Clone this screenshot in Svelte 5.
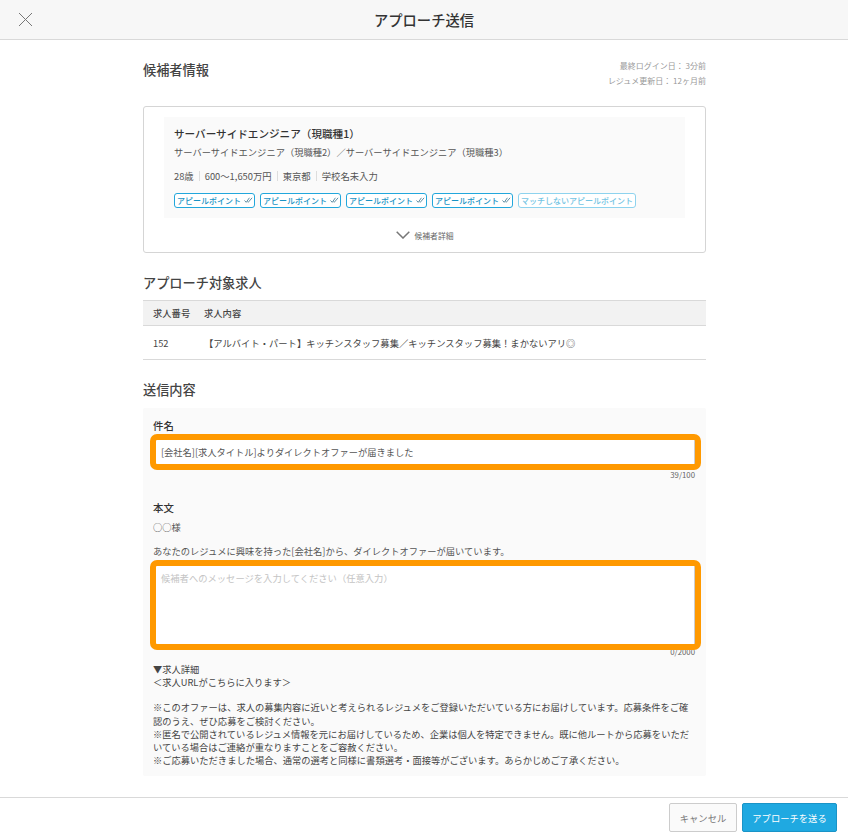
<script>
  const badges = ['アピールポイント', 'アピールポイント', 'アピールポイント', 'アピールポイント'];
</script>

<div class="page">
  <header class="top">
    <button class="close" aria-label="閉じる">
      <svg width="15" height="15" viewBox="0 0 15 15"><path d="M1 1l13 13M14 1L1 14" stroke="#777" stroke-width="1" fill="none"/></svg>
    </button>
    <h1>アプローチ送信</h1>
  </header>

  <main class="main">
    <section class="head-row">
      <h2>候補者情報</h2>
      <div class="dates">
        <p>最終ログイン日： 3分前</p>
        <p>レジュメ更新日： 12ヶ月前</p>
      </div>
    </section>

    <section class="card">
      <div class="inner">
        <h3>サーバーサイドエンジニア（現職種1）</h3>
        <p class="sub">サーバーサイドエンジニア（現職種2）／サーバーサイドエンジニア（現職種3）</p>
        <ul class="meta">
          <li>28歳</li><li>600〜1,650万円</li><li>東京都</li><li>学校名未入力</li>
        </ul>
        <div class="badges">
          {#each badges as b}
            <span class="badge">{b}
              <svg width="9" height="7" viewBox="0 0 10 7"><path d="M0.5 3.5l2 2 3.5-5M3.8 4.6l0.9 0.9 4.3-5" stroke="#5f8ea3" stroke-width="1.1" fill="none"/></svg>
            </span>
          {/each}
          <span class="badge off">マッチしないアピールポイント</span>
        </div>
      </div>
      <div class="detail">
        <svg width="14" height="8" viewBox="0 0 14 8"><path d="M0.7 0.7L7 7l6.3-6.3" stroke="#777" stroke-width="1.5" fill="none"/></svg>
        <span>候補者詳細</span>
      </div>
    </section>

    <h2 class="job-title">アプローチ対象求人</h2>
    <table class="jobs">
      <thead><tr><th class="c1">求人番号</th><th>求人内容</th></tr></thead>
      <tbody><tr><td class="c1">152</td><td>【アルバイト・パート】キッチンスタッフ募集／キッチンスタッフ募集！まかないアリ◎</td></tr></tbody>
    </table>

    <h2 class="send-title">送信内容</h2>
    <section class="form">
      <div class="label">件名</div>
      <div class="input">[会社名][求人タイトル]よりダイレクトオファーが届きました</div>
      <div class="count">39/100</div>
      <div class="label body-label">本文</div>
      <p class="line">○○様</p>
      <p class="line intro">あなたのレジュメに興味を持った[会社名]から、ダイレクトオファーが届いています。</p>
      <div class="textarea">候補者へのメッセージを入力してください（任意入力）</div>
      <div class="count c2">0/2000</div>
      <p class="para">▼求人詳細<br/>＜求人URLがこちらに入ります＞</p>
      <p class="para notes">※このオファーは、求人の募集内容に近いと考えられるレジュメをご登録いただいている方にお届けしています。応募条件をご確認のうえ、ぜひ応募をご検討ください。<br/>※匿名で公開されているレジュメ情報を元にお届けしているため、企業は個人を特定できません。既に他ルートから応募をいただいている場合はご連絡が重なりますことをご容赦ください。<br/>※ご応募いただきました場合、通常の選考と同様に書類選考・面接等がございます。あらかじめご了承ください。</p>
    </section>
  </main>

  <footer class="foot">
    <button class="btn cancel">キャンセル</button>
    <button class="btn send">アプローチを送る</button>
  </footer>
</div>

<style>
  :global(body) { margin: 0; background: #fff; }
  * { box-sizing: border-box; }
  .page {
    width: 848px; height: 836px; display: flex; flex-direction: column; overflow: hidden;
    font-family: "Noto Sans CJK JP", "Noto Sans", sans-serif; color: #444; background: #fff;
  }
  h1, h2, h3, p, ul { margin: 0; padding: 0; }
  .top {
    height: 40px; flex: none; background: #f7f7f7; border-bottom: 1px solid #d9d9d9;
    display: flex; align-items: center; justify-content: center; position: relative;
  }
  .close { position: absolute; left: 18px; top: 12px; padding: 0; border: 0; background: none; display: flex; }
  h1 { font-size: 14.3px; font-weight: 500; color: #333; line-height: 40px; }
  .main { width: 563px; margin-left: 143px; flex: 1; min-height: 0; padding-top: 20px; }
  .head-row { display: flex; justify-content: space-between; align-items: flex-start; height: 46px; }
  h2 { font-size: 13.2px; font-weight: 500; color: #444; line-height: 20px; }
  .dates { font-size: 8px; color: #999; text-align: right; line-height: 14.6px; margin-top: -1px; }
  .card { height: 147px; border: 1px solid #d5d5d5; border-radius: 3px; padding: 10px 20px 0; }
  .inner { height: 101px; background: #fafafa; padding: 9px 10px 0; }
  h3 { font-size: 10.6px; font-weight: 500; color: #333; line-height: 15px; }
  .sub { font-size: 9.27px; line-height: 14px; color: #555; margin-top: 4px; }
  .meta { list-style: none; display: flex; font-size: 9.35px; color: #555; margin-top: 10px; }
  .meta li + li { margin-left: 5px; padding-left: 5px; border-left: 1px solid #ddd; }
  .meta li { height: 10px; line-height: 10px; margin-top: 2px; }
  .badges { display: flex; gap: 5px; margin-top: 12px; }
  .badge {
    height: 15px; border: 1px solid #22a7dc; border-radius: 3px; background: #fff; color: #1a93c4;
    font-size: 8px; font-weight: 500; line-height: 13px; padding: 0 1px 0 2px; display: inline-flex; align-items: center; gap: 3px; white-space: nowrap;
  }
  .badge.off { border-color: #8ed3ee; color: #74c4e3; padding: 0 2px; }
  .detail { display: flex; justify-content: center; align-items: center; gap: 5px; height: 34px; font-size: 7.8px; color: #666; }
  .job-title { margin-top: 20px; }
  .jobs { width: 100%; border-collapse: collapse; margin-top: 7px; font-size: 9.3px; }
  .jobs th { height: 25px; background: #f2f2f2; border-top: 1px solid #d9d9d9; border-bottom: 1px solid #d9d9d9; text-align: left; font-weight: 500; color: #444; padding: 0; }
  .jobs td { height: 34px; border-bottom: 1px solid #d9d9d9; padding: 0; color: #444; }
  .c1 { width: 61px; padding-left: 10px !important; }
  .send-title { margin-top: 20px; }
  .form { margin-top: 8px; height: 368px; background: #fafafa; padding: 10px 11px 0 10px; border-radius: 2px; }
  .label { font-size: 10.4px; font-weight: 500; color: #333; line-height: 15px; }
  .input {
    margin: 7px 0 0 3px; width: 539px; height: 24px; background: #fff; outline: 6px solid #ff9900; border-radius: 1px;
    border-right: 1px solid #ccc;
    font-size: 9.24px; line-height: 24px; padding-left: 5px; color: #555; white-space: nowrap;
  }
  .count { font-size: 7.8px; color: #666; text-align: right; line-height: 12px; margin-top: 5px; }
  .body-label { margin-top: 19px; }
  .line { font-size: 9.28px; line-height: 14px; color: #555; margin-top: 5px; }
  .intro { margin-top: 10px; }
  .textarea {
    margin: 8px 0 0 3px; width: 539px; height: 78px; background: #fff; outline: 6px solid #ff9900; border-radius: 1px;
    border-right: 1px solid #ccc;
    font-size: 9.3px; line-height: 14px; padding: 5px 5px; color: #c4c4c4;
  }
  .c2 { margin-top: 3px; line-height: 10px; }
  .para { font-size: 9.28px; line-height: 13.2px; color: #444; margin-top: 6px; }
  .notes { margin-top: 12px; }
  .foot {
    height: 39px; flex: none; border-top: 1px solid #d9d9d9; display: flex; justify-content: flex-end; gap: 5px;
    padding: 5px 11px 0 0; background: #fff;
  }
  .btn { height: 29px; border-radius: 2px; font-family: inherit; font-size: 9.3px; padding: 0; }
  .cancel { width: 68px; background: #fafafa; border: 1px solid #ccc; color: #777; }
  .send { width: 95px; background: #1fa9e1; border: 1px solid #1a94c7; color: #fff; }
</style>
